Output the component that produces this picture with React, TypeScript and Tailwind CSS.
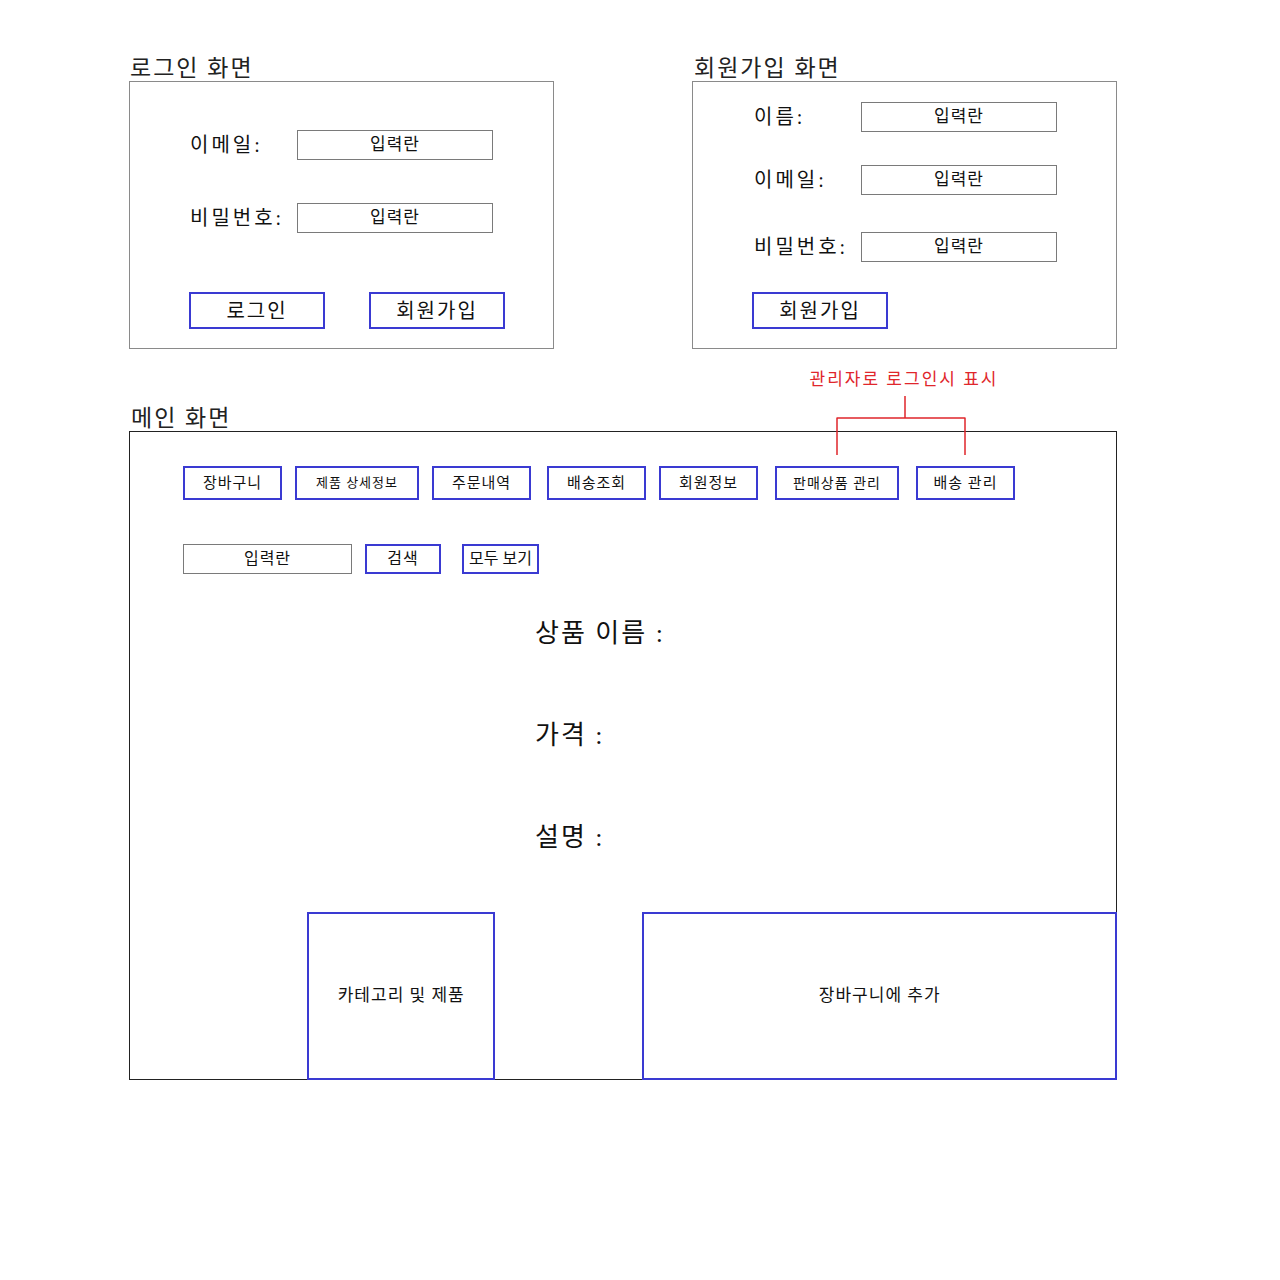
import React from "react";

const font = "font-['Liberation_Serif','Noto_Sans_CJK_KR',serif]";
const blue = "border-2 border-[#3a3ad2] flex items-center justify-center text-[#111]";
const field = "border border-[#7a7a7a] flex items-center justify-center text-[#111]";
const title = "h-[28px] text-[23px] leading-[32px] tracking-[2px] text-[#222]";

function FormRow({ label, className = "" }: { label: string; className?: string }) {
	return (
		<div className={`flex items-center h-[30px] ${className}`}>
			<span className="w-[107px] text-[20px] tracking-[3px] text-[#111]">{label}</span>
			<div className={`${field} w-[196px] h-[30px] text-[17px] tracking-[1px]`}>입력란</div>
		</div>
	);
}

const navItems = [
	{ label: "장바구니", w: "w-[99px]", ml: "ml-0", size: "text-[15px]" },
	{ label: "제품 상세정보", w: "w-[124px]", ml: "ml-[13px]", size: "text-[13px]" },
	{ label: "주문내역", w: "w-[99px]", ml: "ml-[13px]", size: "text-[15px]" },
	{ label: "배송조회", w: "w-[99px]", ml: "ml-[16px]", size: "text-[15px]" },
	{ label: "회원정보", w: "w-[99px]", ml: "ml-[13px]", size: "text-[15px]" },
	{ label: "판매상품 관리", w: "w-[124px]", ml: "ml-[17px]", size: "text-[14px]" },
	{ label: "배송 관리", w: "w-[99px]", ml: "ml-[17px]", size: "text-[15px]" },
];

export default function App() {
	return (
		<div className={`${font} w-[1280px] h-[1280px] bg-white pl-[129px] pt-[53px]`}>
			{/* top row: login + signup */}
			<div className="flex gap-[138px]">
				{/* 로그인 */}
				<div className="w-[425px]">
					<h2 className={`${title} pl-[1px]`}>로그인 화면</h2>
					<div className="h-[268px] border border-[#8a8a8a] pt-[48px] pl-[60px]">
						<FormRow label="이메일:" />
						<FormRow label="비밀번호:" className="mt-[43px]" />
						<div className="flex gap-[44px] mt-[59px] -ml-[1px]">
							<div className={`${blue} w-[136px] h-[37px] text-[20px] tracking-[2px]`}>로그인</div>
							<div className={`${blue} w-[136px] h-[37px] text-[20px] tracking-[2px]`}>회원가입</div>
						</div>
					</div>
				</div>
				{/* 회원가입 */}
				<div className="w-[425px]">
					<h2 className={`${title} pl-[2px]`}>회원가입 화면</h2>
					<div className="h-[268px] border border-[#8a8a8a] pt-[20px] pl-[61px]">
						<FormRow label="이름:" />
						<FormRow label="이메일:" className="mt-[33px]" />
						<FormRow label="비밀번호:" className="mt-[37px]" />
						<div className={`${blue} w-[136px] h-[37px] text-[20px] tracking-[2px] mt-[30px] -ml-[2px]`}>회원가입</div>
					</div>
				</div>
			</div>

			{/* 메인 화면 */}
			<div className="relative w-[988px] mt-[54px]">
				{/* admin annotation */}
				<div className="absolute left-[671px] top-[-34px] w-[208px] text-center text-[17px] leading-[22px] tracking-[2px] text-[#e0262b]">
					관리자로 로그인시 표시
				</div>
				<svg className="absolute left-[700px] top-[-7px]" width="140" height="60" viewBox="0 0 140 60">
					<path d="M76 0V22M8 22H136M8 21.5V59M136 21.5V59" stroke="#e0262b" strokeWidth="1.5" fill="none" />
				</svg>

				<h2 className={`${title} pl-[2px]`}>메인 화면</h2>
				<div className="h-[649px] border border-[#222] flex flex-col pl-[53px]">
					{/* nav */}
					<div className="flex mt-[34px]">
						{navItems.map((item) => (
							<div key={item.label} className={`${blue} ${item.w} ${item.ml} ${item.size} tracking-[1px] h-[34px]`}>
								{item.label}
							</div>
						))}
					</div>
					{/* search */}
					<div className="flex mt-[44px]">
						<div className={`${field} w-[169px] h-[30px] text-[16px] tracking-[1px]`}>입력란</div>
						<div className={`${blue} w-[76px] h-[30px] text-[16px] tracking-[1px] ml-[13px]`}>검색</div>
						<div className={`${blue} w-[77px] h-[30px] text-[16px] ml-[21px]`}>모두 보기</div>
					</div>
					{/* product info */}
					<div className="ml-[352px] text-[26px] leading-[32px] tracking-[2px] text-[#111]">
						<p className="mt-[44px]">상품 이름 :</p>
						<p className="mt-[70px]">가격 :</p>
						<p className="mt-[70px]">설명 :</p>
					</div>
					{/* bottom boxes */}
					<div className="flex items-end mt-auto -ml-[53px] mb-[-1px] mr-[-1px]">
						<div className={`${blue} w-[189px] h-[168px] ml-[177px] text-[17px] tracking-[1px]`}>카테고리 및 제품</div>
						<div className={`${blue} w-[476px] h-[168px] ml-[147px] text-[17px] tracking-[1px]`}>장바구니에 추가</div>
					</div>
				</div>
			</div>
		</div>
	);
}
